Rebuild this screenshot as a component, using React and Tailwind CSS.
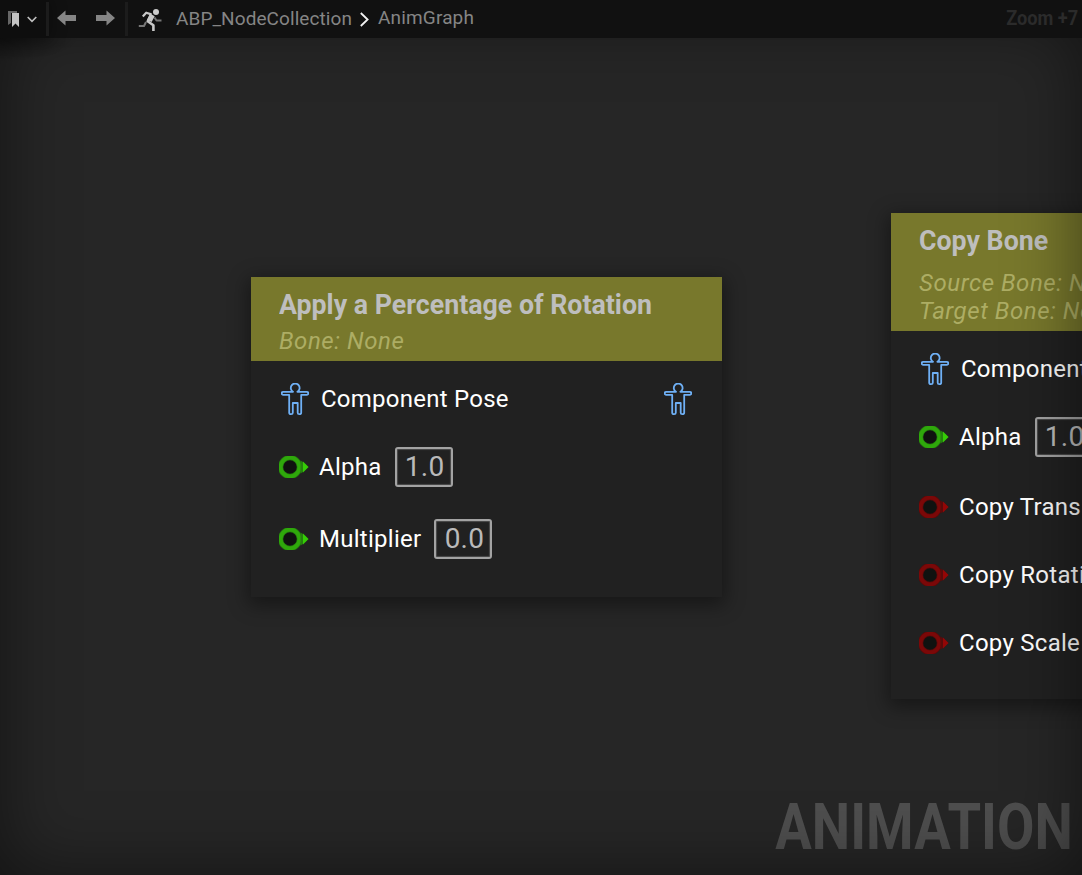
import React from 'react';

function PoseIcon() {
  return (
    <svg className="h-8 w-7 shrink-0" viewBox="0 0 28 32" fill="none" stroke="#6fb0f5" strokeWidth="1.8" strokeLinejoin="round" strokeLinecap="round">
      <path d="M12 8.8A4.4 4.4 0 1 1 16.4 8.8H25.8A1.3 1.3 0 0 1 25.8 11.8H20.2V29.7Q20.2 31.1 18.3 31.1Q16.7 31.1 16.7 29.7V20H11.8V29.7Q11.8 31.1 10.1 31.1Q8.2 31.1 8.2 29.7V11.8H2.2A1.4 1.4 0 0 1 2.2 8.8H12" />
    </svg>
  );
}

function Pin({ red }) {
  const ring = red ? '#7b0808' : '#2fa80b';
  const edge = red ? '#5a0a0a' : '#25800e';
  const tip = red ? '#940606' : '#35cc06';
  return (
    <svg className="h-[22px] w-[30px] shrink-0" viewBox="0 0 30 22">
      <circle cx="11" cy="11" r="9.4" fill="#101210" stroke={edge} strokeWidth="5.2" />
      <circle cx="11" cy="11" r="9.4" stroke={ring} strokeWidth="3.8" fill="none" />
      <path d="M21.5 4.5L24 6V16L21.5 17.5Z" fill={edge} />
      <path d="M24 5.5L29.6 11L24 16.5Z" fill={tip} />
    </svg>
  );
}

function Value({ children }) {
  return (
    <span className="ml-[13px] flex h-10 w-[58px] shrink-0 items-center justify-center rounded-[3px] border-2 border-[#a3a3a3] pl-[2px] text-[28px] tracking-[0.2px] text-[#bababa] shadow-[inset_0_0_1px_1px_rgba(160,160,160,0.35)]">
      {children}
    </span>
  );
}

function PinRow({ label, value, red, className }) {
  return (
    <div className={`flex h-10 items-center whitespace-nowrap ${className}`}>
      <Pin red={red} />
      <span className="ml-[10px] text-2xl tracking-[0.27px] text-white">{label}</span>
      {value && <Value>{value}</Value>}
    </div>
  );
}

function Node({ title, lines, headClass, className, children }) {
  return (
    <section className={`absolute w-[471px] bg-[#212121] shadow-[0_5px_18px_3px_rgba(0,0,0,0.4)] ${className}`}>
      <header className={`bg-[#78782c] pl-7 whitespace-nowrap ${headClass}`}>
        <h2 className="origin-left scale-x-[0.955] text-[28px] leading-8 font-bold text-[#bebebe]">{title}</h2>
        <div className="text-2xl leading-7 tracking-[0.57px] text-[#adad64] italic">
          {lines.map((line) => <p key={line}>{line}</p>)}
        </div>
      </header>
      <div className="px-7">
        <div className="mt-[18px] flex h-10 items-center px-[2px] whitespace-nowrap">
          <PoseIcon />
          <span className="ml-3 flex-1 text-2xl tracking-[0.25px] text-white">Component Pose</span>
          <PoseIcon />
        </div>
        {children}
      </div>
    </section>
  );
}

function Toolbar() {
  return (
    <nav className="relative flex h-[38px] items-center bg-[#111111] text-[#858585]">
      <div className="flex h-full items-center bg-[#0e0e0e] shadow-[0_0_16px_2px_rgba(0,0,0,0.3)]">
        <svg className="ml-2 h-4 w-3" viewBox="0 0 12 16">
          <path d="M0 0H9V2H3V12L0 14Z" fill="#666" />
          <path d="M4 2H11V16L7.5 12.4L4 16Z" fill="#c4c4c4" />
        </svg>
        <svg className="ml-[7px] h-[7px] w-[10px]" viewBox="0 0 10 7" fill="none" stroke="#c0c0c0" strokeWidth="1.6"><path d="M.7 1L5 5.3L9.3 1" /></svg>
        <i className="ml-[9px] h-[34px] w-[3px] bg-[#1c1c1c]" />
      </div>
      <svg className="mb-[2px] ml-2 h-4 w-[19px]" viewBox="0 0 19 16" fill="#858585"><path d="M0 8L8.5 .5V5H19V11H8.5V15.5Z" /></svg>
      <svg className="mb-[2px] ml-5 h-4 w-[19px]" viewBox="0 0 19 16" fill="#858585"><path d="M19 8L10.5 .5V5H0V11H10.5V15.5Z" /></svg>
      <i className="ml-[10px] h-[34px] w-[3px] bg-[#1c1c1c]" />
      <svg className="mt-[1px] ml-[10px] h-6 w-6" viewBox="0 0 24 24" fill="none" strokeLinejoin="round">
        <path d="M8 14L6 18H.8M16.5 9.5L18.5 12.5H23.5" stroke="#777" strokeWidth="2" />
        <circle cx="18" cy="4" r="3" fill="#ccc" />
        <path d="M4.8 8.5L8.2 4.7L13.5 6.4" stroke="#c8c8c8" strokeWidth="2.2" />
        <path d="M13.2 6.5L9.7 13.3L15.4 17.3V23" stroke="#c8c8c8" strokeWidth="2.6" />
        <path d="M12 5.5L16.7 8.3L13.6 14L9 12Z" fill="#c8c8c8" />
      </svg>
      <span className="ml-[14px] text-[19px] tracking-[0.08px]">ABP_NodeCollection</span>
      <svg className="ml-2 h-[15px] w-[9px]" viewBox="0 0 9 15" fill="none" stroke="#f2f2f2" strokeWidth="1.8"><path d="M.8 1L7.6 7.5L.8 14" /></svg>
      <span className="mb-[2px] ml-[9px] text-[19px] tracking-[0.15px]">AnimGraph</span>
      <span className="mr-[4px] mb-[2px] ml-auto origin-right scale-x-[0.91] text-[20px] font-bold whitespace-nowrap text-[#2b2b2b]">Zoom +7</span>
    </nav>
  );
}

export default function App() {
  return (
    <div className="flex h-[875px] w-[1082px] flex-col overflow-hidden bg-[#262626] [font-family:Roboto,sans-serif]">
      <Toolbar />
      <main className="relative flex-1 overflow-hidden">
        <div className="absolute top-0 left-0 h-6 w-20 bg-[radial-gradient(ellipse_at_0%_0%,rgba(0,0,0,0.4),transparent_70%)]" />
        <Node title="Apply a Percentage of Rotation" lines={['Bone: None']} headClass="h-[84px] pt-3 [&>div]:mt-[6px]" className="top-[239px] left-[251px] h-[320px]">
          <PinRow label="Alpha" value="1.0" className="mt-7" />
          <PinRow label="Multiplier" value="0.0" className="mt-8" />
        </Node>
        <Node title="Copy Bone" lines={['Source Bone: None', 'Target Bone: None']} headClass="h-[118px] pt-3 [&>div]:mt-[12px]" className="top-[175px] left-[891px] h-[486px]">
          <PinRow label="Alpha" value="1.0" className="mt-7" />
          <PinRow label="Copy Translation" red className="mt-[30px]" />
          <PinRow label="Copy Rotation" red className="mt-7" />
          <PinRow label="Copy Scale" red className="mt-7" />
        </Node>
        <div className="absolute right-[9px] bottom-[10px] origin-right scale-x-[0.836] text-[65px] leading-[76px] font-bold text-[#4e4e4e]">ANIMATION</div>
        <div className="pointer-events-none absolute inset-x-0 -top-5 bottom-0 shadow-[inset_0_0_70px_rgba(0,0,0,0.5)]" />
      </main>
    </div>
  );
}
